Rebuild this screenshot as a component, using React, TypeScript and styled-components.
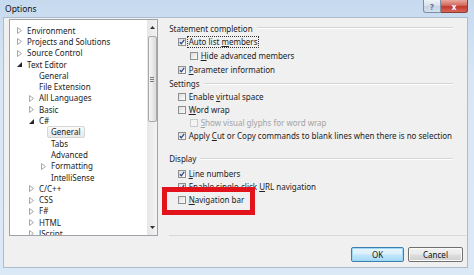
import React from "react";
import styled, { createGlobalStyle } from "styled-components";

const GlobalStyle = createGlobalStyle`
  html, body {
    margin: 0;
    padding: 0;
    background: #dae7f5;
  }
`;

const Window = styled.div`
  width: 474px;
  height: 275px;
  overflow: hidden;
  background: linear-gradient(#c6daef, #d9e7f5 30%, #dbe8f6);
  display: flex;
  flex-direction: column;
  font-family: "Noto Sans", "Open Sans", sans-serif;
  font-size: 8px;
  color: #222;
`;

const TitleBar = styled.div`
  height: 17px;
  flex: none;
  display: flex;
  align-items: flex-start;
  padding-right: 6px;
`;

const Title = styled.div`
  padding-left: 5px;
  line-height: 17px;
  font-size: 8.5px;
  color: #111;
`;

const Captions = styled.div`
  margin-left: auto;
  display: flex;
  height: 13px;
`;

const CaptionButton = styled.div<{ $close?: boolean }>`
  width: ${(p) => (p.$close ? 27 : 18)}px;
  height: 13px;
  box-sizing: border-box;
  display: flex;
  align-items: center;
  justify-content: center;
  font-size: 8px;
  font-weight: bold;
  color: ${(p) => (p.$close ? "#fff" : "#5a6b82")};
  border: 1px solid ${(p) => (p.$close ? "#8a3c35" : "#7f8ea3")};
  border-top: none;
  background: ${(p) =>
    p.$close
      ? "linear-gradient(#e9a89e, #d16a5e 45%, #c2392c 55%, #d8665a)"
      : "linear-gradient(#eef3f9, #d8e2ee 45%, #c5d3e4 55%, #d6e1ee)"};
  border-radius: ${(p) => (p.$close ? "0 0 3px 0" : "0 0 0 3px")};
  ${(p) => (p.$close ? "border-left: none;" : "")}
`;

const Client = styled.div`
  margin-left: 3px;
  width: 465px;
  height: 251px;
  box-sizing: border-box;
  border: 1px solid #aebbcb;
  background: #f0f0f0;
  display: flex;
  flex-direction: column;
`;

const MainRow = styled.div`
  display: flex;
  padding: 1px 0 0 5px;
`;

const Tree = styled.div`
  width: 152px;
  height: 217px;
  box-sizing: border-box;
  border: 1px solid #9ea3aa;
  background: #fff;
  display: flex;
`;

const TreeList = styled.div`
  flex: 1;
  overflow: hidden;
  padding-top: 5px;
`;

const TreeRow = styled.div<{ $level: number }>`
  height: 11.3px;
  display: flex;
  align-items: center;
  padding-left: ${(p) => 7 + p.$level * 12}px;
  white-space: nowrap;
`;

const Expander = styled.span`
  width: 9px;
  flex: none;
  display: flex;
  align-items: center;
`;

const TreeText = styled.span<{ $selected?: boolean }>`
  line-height: 10px;
  padding: 0 3px;
  margin-left: -3px;
  border: 1px solid ${(p) => (p.$selected ? "#d6d6d6" : "transparent")};
  border-radius: 2px;
  background: ${(p) =>
    p.$selected ? "linear-gradient(#fafafa, #e8e8e8)" : "transparent"};
`;

const ScrollBar = styled.div`
  width: 10px;
  flex: none;
  background: linear-gradient(90deg, #e6e6e6, #f3f3f3);
  display: flex;
  flex-direction: column;
  align-items: center;
`;

const ScrollArrow = styled.div`
  height: 15px;
  width: 10px;
  display: flex;
  align-items: center;
  justify-content: center;
`;

const Thumb = styled.div`
  margin-top: 1px;
  width: 9px;
  height: 86px;
  box-sizing: border-box;
  border: 1px solid #a8a8a8;
  border-radius: 2px;
  background: linear-gradient(90deg, #f6f6f6, #e8e8e8 50%, #dcdcdc);
  display: flex;
  align-items: center;
  justify-content: center;
`;

const Gripper = styled.div`
  width: 4px;
  height: 5px;
  background: repeating-linear-gradient(#7a7a7a 0 1px, transparent 1px 2px);
`;

const Spacer = styled.div`
  flex: 1;
`;

const RightPane = styled.div`
  flex: 1;
  margin-left: 4px;
  padding: 0 1px 0 7px;
  position: relative;
`;

const PaneInner = styled.div`
  height: 217px;
  box-sizing: border-box;
  border-bottom: 1px solid #d8d8d8;
  padding-top: 2.5px;
`;

const Group = styled.div<{ $top: number; $rowH: number }>`
  margin-top: ${(p) => p.$top}px;
  margin-right: 13px;
  --row-h: ${(p) => p.$rowH}px;
`;

const GroupHeader = styled.div<{ $after?: number }>`
  height: 13px;
  display: flex;
  align-items: center;
  gap: 4px;
  margin-bottom: ${(p) => p.$after ?? 0}px;
  &::after {
    content: "";
    flex: 1;
    height: 0;
    border-top: 1px solid #d5d5d5;
    border-bottom: 1px solid #fff;
  }
`;

const CheckRow = styled.div<{ $level?: number; $disabled?: boolean }>`
  height: var(--row-h);
  display: flex;
  align-items: center;
  gap: 1.5px;
  padding-left: ${(p) => 9 + (p.$level ?? 0) * 12}px;
  color: ${(p) => (p.$disabled ? "#a3a3a3" : "#222")};
  white-space: nowrap;
`;

const Box = styled.span<{ $disabled?: boolean }>`
  width: 8px;
  height: 8px;
  flex: none;
  box-sizing: border-box;
  border: 1px solid ${(p) => (p.$disabled ? "#cacaca" : "#8e8f8f")};
  background: ${(p) =>
    p.$disabled ? "#f4f4f4" : "linear-gradient(135deg, #dcdcdc, #fdfdfd)"};
  display: flex;
  align-items: center;
  justify-content: center;
`;

const Label = styled.span<{ $focus?: boolean }>`
  line-height: 10px;
  padding: 0 1px;
  outline: ${(p) => (p.$focus ? "1px dotted #333" : "none")};
  outline-offset: 0;
`;

const Highlight = styled.div`
  position: absolute;
  left: 0;
  top: 168px;
  width: 93px;
  height: 28px;
  box-sizing: border-box;
  border: 5px solid #e3131b;
`;

const ButtonRow = styled.div`
  margin-top: auto;
  display: flex;
  justify-content: flex-end;
  gap: 4px;
  padding: 0 4px 5px 0;
`;

const Button = styled.div<{ $default?: boolean; $w: number }>`
  width: ${(p) => p.$w}px;
  height: 15px;
  box-sizing: border-box;
  border-radius: 2px;
  border: 1px solid ${(p) => (p.$default ? "#3c7fb1" : "#707070")};
  box-shadow: inset 0 0 0 1px ${(p) => (p.$default ? "#9ed8f5" : "#fbfbfb")};
  background: ${(p) =>
    p.$default
      ? "linear-gradient(#eaf6fd, #d9f0fc 45%, #bee6fd 55%, #a7d9f5)"
      : "linear-gradient(#f2f2f2, #ebebeb 45%, #dddddd 55%, #cfcfcf)"};
  display: flex;
  align-items: center;
  justify-content: center;
  color: #111;
`;

const Collapsed = () => (
  <svg width="5" height="7" viewBox="0 0 5 7">
    <polygon points="0.5,0.5 4.5,3.5 0.5,6.5" fill="#fff" stroke="#a6a6a6" />
  </svg>
);

const Expanded = () => (
  <svg width="5" height="5" viewBox="0 0 5 5">
    <polygon points="5,0 5,5 0,5" fill="#262626" />
  </svg>
);

const Check = () => (
  <svg width="6" height="6" viewBox="0 0 6 6">
    <path d="M0.8 3.2 L2.3 4.8 L5.2 0.8" fill="none" stroke="#31468a" strokeWidth="1.3" />
  </svg>
);

type Node = { text: string; level: number; state?: "open" | "closed"; selected?: boolean };

const treeNodes: Node[] = [
  { text: "Environment", level: 0, state: "closed" },
  { text: "Projects and Solutions", level: 0, state: "closed" },
  { text: "Source Control", level: 0, state: "closed" },
  { text: "Text Editor", level: 0, state: "open" },
  { text: "General", level: 1 },
  { text: "File Extension", level: 1 },
  { text: "All Languages", level: 1, state: "closed" },
  { text: "Basic", level: 1, state: "closed" },
  { text: "C#", level: 1, state: "open" },
  { text: "General", level: 2, selected: true },
  { text: "Tabs", level: 2 },
  { text: "Advanced", level: 2 },
  { text: "Formatting", level: 2, state: "closed" },
  { text: "IntelliSense", level: 2 },
  { text: "C/C++", level: 1, state: "closed" },
  { text: "CSS", level: 1, state: "closed" },
  { text: "F#", level: 1, state: "closed" },
  { text: "HTML", level: 1, state: "closed" },
  { text: "JScript", level: 1, state: "closed" },
];

const Option = ({
  checked,
  level,
  disabled,
  focus,
  children,
}: {
  checked?: boolean;
  level?: number;
  disabled?: boolean;
  focus?: boolean;
  children: React.ReactNode;
}) => (
  <CheckRow $level={level} $disabled={disabled}>
    <Box $disabled={disabled}>{checked && <Check />}</Box>
    <Label $focus={focus}>{children}</Label>
  </CheckRow>
);

export default function App() {
  return (
    <Window>
      <GlobalStyle />
      <TitleBar>
        <Title>Options</Title>
        <Captions>
          <CaptionButton>?</CaptionButton>
          <CaptionButton $close>x</CaptionButton>
        </Captions>
      </TitleBar>
      <Client>
        <MainRow>
          <Tree>
            <TreeList>
              {treeNodes.map((n, i) => (
                <TreeRow key={i} $level={n.level}>
                  <Expander>
                    {n.state === "closed" && <Collapsed />}
                    {n.state === "open" && <Expanded />}
                  </Expander>
                  <TreeText $selected={n.selected}>{n.text}</TreeText>
                </TreeRow>
              ))}
            </TreeList>
            <ScrollBar>
              <ScrollArrow>
                <svg width="5" height="3" viewBox="0 0 5 3">
                  <polygon points="0,3 2.5,0 5,3" fill="#333" />
                </svg>
              </ScrollArrow>
              <Thumb>
                <Gripper />
              </Thumb>
              <Spacer />
              <ScrollArrow>
                <svg width="5" height="3" viewBox="0 0 5 3">
                  <polygon points="0,0 5,0 2.5,3" fill="#333" />
                </svg>
              </ScrollArrow>
            </ScrollBar>
          </Tree>
          <RightPane>
            <PaneInner>
              <Group $top={0} $rowH={14}>
                <GroupHeader>Statement completion</GroupHeader>
                <Option checked focus>
                  Auto list <u>m</u>embers
                </Option>
                <Option level={1}>
                  <u>H</u>ide advanced members
                </Option>
                <Option checked>
                  <u>P</u>arameter information
                </Option>
              </Group>
              <Group $top={0.5} $rowH={13}>
                <GroupHeader>Settings</GroupHeader>
                <Option>
                  Enable <u>v</u>irtual space
                </Option>
                <Option>
                  <u>W</u>ord wrap
                </Option>
                <Option level={1} disabled>
                  <u>S</u>how visual glyphs for word wrap
                </Option>
                <Option checked>
                  Apply <u>C</u>ut or Copy commands to blank lines when there is no selection
                </Option>
              </Group>
              <Group $top={10} $rowH={13}>
                <GroupHeader $after={2}>Display</GroupHeader>
                <Option checked>
                  <u>L</u>ine numbers
                </Option>
                <Option checked>
                  Enable single-click <u>U</u>RL navigation
                </Option>
                <Option>
                  <u>N</u>avigation bar
                </Option>
              </Group>
            </PaneInner>
            <Highlight />
          </RightPane>
        </MainRow>
        <ButtonRow>
          <Button $default $w={53}>
            OK
          </Button>
          <Button $w={55}>Cancel</Button>
        </ButtonRow>
      </Client>
    </Window>
  );
}
